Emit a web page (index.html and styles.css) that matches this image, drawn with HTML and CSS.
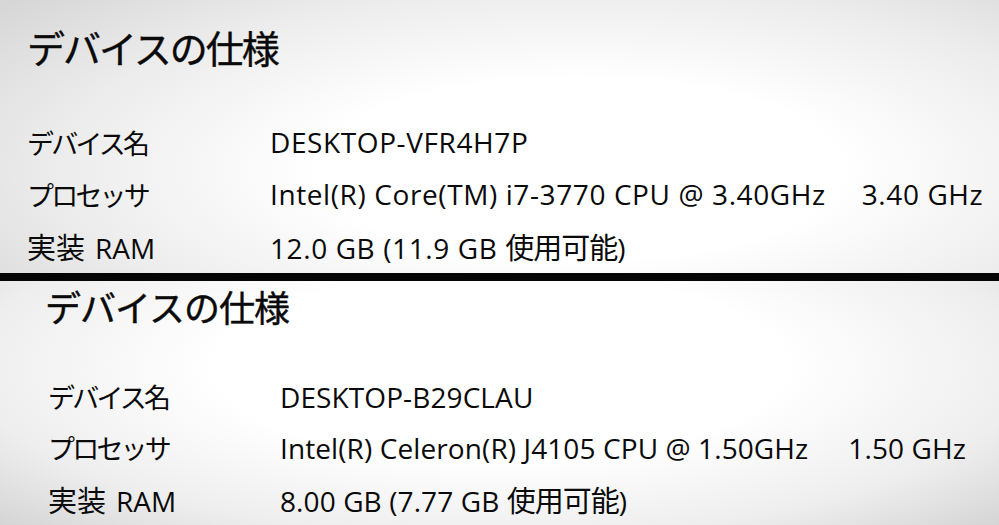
FILE: index.html
```html
<!DOCTYPE html>
<html lang="ja">
<head>
<meta charset="utf-8">
<title>デバイスの仕様</title>
<link rel="stylesheet" href="styles.css">
</head>
<body>
<div class="page">
  <section class="panel panel-top">
    <h1 class="title">デバイスの仕様</h1>
    <div class="specs">
      <div class="label">デバイス名</div>
      <div class="value">DESKTOP-VFR4H7P</div>
      <div class="label">プロセッサ</div>
      <div class="value">Intel(R) Core(TM) i7-3770 CPU @ 3.40GHz<span class="gap"></span>3.40 GHz</div>
      <div class="label"><span class="kanji">実装</span><span class="latin">RAM</span></div>
      <div class="value">12.0 GB (11.9 GB <span class="kanji-v">使用可能</span>)</div>
    </div>
  </section>
  <div class="divider"></div>
  <section class="panel panel-bottom">
    <h1 class="title">デバイスの仕様</h1>
    <div class="specs">
      <div class="label">デバイス名</div>
      <div class="value">DESKTOP-B29CLAU</div>
      <div class="label">プロセッサ</div>
      <div class="value">Intel(R) Celeron(R) J4105 CPU @ 1.50GHz<span class="gap"></span>1.50 GHz</div>
      <div class="label"><span class="kanji">実装</span><span class="latin">RAM</span></div>
      <div class="value">8.00 GB (7.77 GB <span class="kanji-v">使用可能</span>)</div>
    </div>
  </section>
</div>
</body>
</html>
```

FILE: styles.css
```css
html, body {
  margin: 0;
  padding: 0;
}
body {
  width: 999px;
  height: 525px;
  overflow: hidden;
  background: #fff;
  color: #0a0a0a;
  font-family: "Open Sans", "Noto Sans CJK JP", sans-serif;
}
.page {
  display: flex;
  flex-direction: column;
  height: 525px;
}
.panel {
  box-sizing: border-box;
  overflow: hidden;
}
.panel-top {
  height: 273px;
  padding: 20px 0 0 27px;
  background: radial-gradient(ellipse 75% 95% at 58% 62%, #ffffff 35%, #ececec 70%, #d6d6d6 100%);
}
.panel-bottom {
  height: 244px;
  padding: 0 0 0 45px;
  background: radial-gradient(ellipse 75% 100% at 50% 35%, #ffffff 38%, #eeeeee 70%, #cdcdcd 100%);
}
.divider {
  height: 8px;
  background: #050505;
  flex: none;
}
.title {
  margin: 0;
  font-family: "Noto Sans CJK JP", sans-serif;
  font-weight: 400;
  font-size: 38px;
  line-height: 54px;
  letter-spacing: -2px;
  color: #0a0a0a;
  -webkit-text-stroke: 0.4px #0a0a0a;
}
.panel-bottom .title {
  font-size: 36px;
  line-height: 44px;
  letter-spacing: -1px;
  margin-top: 3px;
}
.specs {
  display: grid;
  grid-template-columns: 243px auto;
  grid-auto-rows: 52px;
  align-items: center;
  margin-top: 42px;
}
.panel-bottom .specs {
  grid-template-columns: 235px auto;
  grid-auto-rows: 51px;
  margin-top: 43px;
}
.label {
  font-family: "Noto Sans CJK JP", sans-serif;
  font-weight: 400;
  font-size: 27px;
  letter-spacing: -2.8px;
  white-space: nowrap;
}
.kanji {
  font-size: 29px;
  letter-spacing: 0;
}
.latin {
  font-family: "Open Sans", sans-serif;
  font-size: 28px;
  font-weight: 500;
  letter-spacing: 0;
  margin-left: 10px;
}
.value {
  font-family: "Open Sans", "Noto Sans CJK JP", sans-serif;
  font-weight: 500;
  font-size: 28px;
  letter-spacing: 0.6px;
  white-space: nowrap;
}
.panel-bottom .value {
  letter-spacing: 0.1px;
}
.kanji-v {
  font-family: "Noto Sans CJK JP", sans-serif;
  font-weight: 400;
  font-size: 29px;
  letter-spacing: -1px;
}
.panel-bottom .label {
  margin-left: 3px;
}
.gap {
  display: inline-block;
  width: 36px;
}
.panel-bottom .gap {
  width: 40px;
}
```
